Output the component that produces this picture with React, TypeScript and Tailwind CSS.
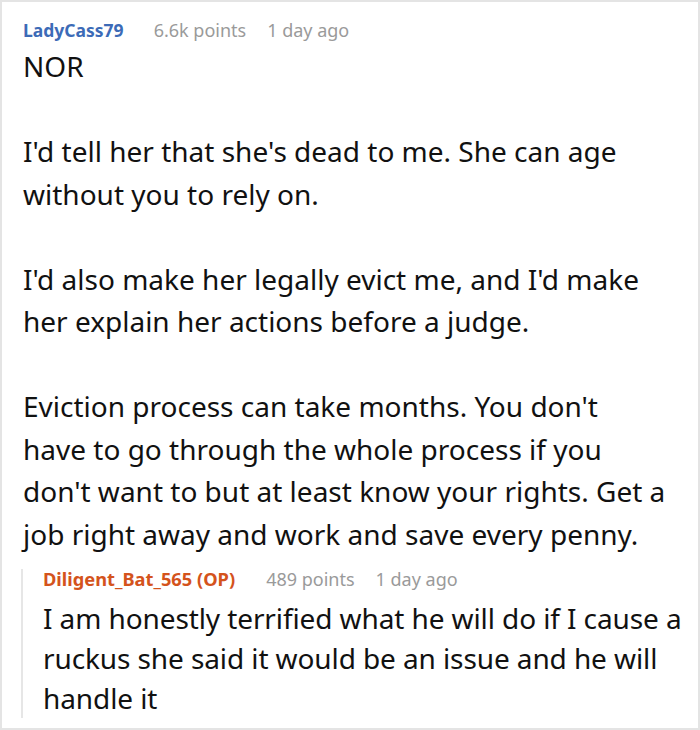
export default function App() {
  const body = "text-[28px] leading-[42.5px] text-[#111]";
  return (
    <div className="w-[700px] h-[730px] bg-white border-2 border-[#e4e4e4] overflow-hidden" style={{ fontFamily: '"Noto Sans", "Open Sans", sans-serif' }}>
      <div className="pl-[21px] pr-[28px] pt-[15px]">
        <div className="flex items-baseline leading-[26px] whitespace-nowrap">
          <span className="text-[17.5px] font-bold text-[#3c6bb7]">LadyCass79</span>
          <span className="ml-[30px] text-[18px] text-[#9a9a9a]">6.6k points</span>
          <span className="ml-[21px] text-[18px] text-[#9a9a9a]">1 day ago</span>
        </div>
        <div className={`mt-[2px] ${body}`}>
          <p>NOR</p>
          <p className="mt-[42.5px]">I'd tell her that she's dead to me. She can age without you to rely on.</p>
          <p className="mt-[42.5px]">I'd also make her legally evict me, and I'd make her explain her actions before a judge.</p>
          <p className="mt-[42.5px]">
            Eviction process can take months. You don't
            <br />
            have to go through the whole process if you
            <br />
            don't want to but at least know your rights. Get a
            <br />
            job right away and work and save every penny.
          </p>
        </div>
        <div className="mt-[14px] -ml-[2px] -mr-[20px] border-l-2 border-[#e6e6e6] pl-[20px]">
          <div className="flex items-baseline leading-[20px] whitespace-nowrap">
            <span className="text-[18.25px] font-bold text-[#d4531c]">Diligent_Bat_565 (OP)</span>
            <span className="ml-[31px] text-[18px] text-[#9a9a9a]">489 points</span>
            <span className="ml-[21px] text-[18px] text-[#9a9a9a]">1 day ago</span>
          </div>
          <p className="mt-[9px] text-[28px] leading-[40px] tracking-[-0.1px] text-[#111]">I am honestly terrified what he will do if I cause a ruckus she said it would be an issue and he will handle it</p>
        </div>
      </div>
    </div>
  );
}
